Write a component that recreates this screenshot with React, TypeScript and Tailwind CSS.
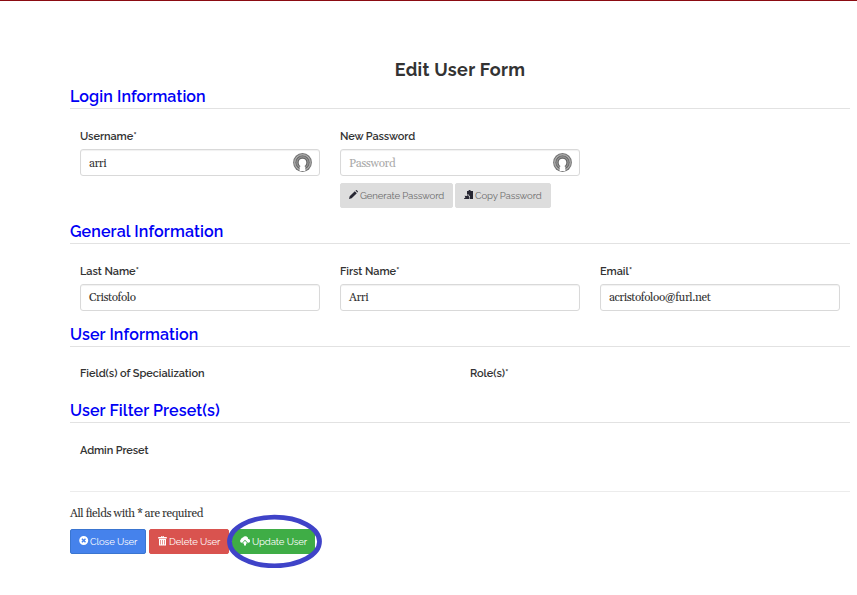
import type { ReactNode } from "react";

const sans = "font-['Raleway','Open_Sans',sans-serif]";
const serif = "font-['Georgia','Gelasio','Liberation_Serif',serif]";

function Section({ title, spacing, className }: { title: string; spacing: string; className: string }) {
  return (
    <div className={`border-b border-[#e2e2e2] ${className}`}>
      <h2 className={`whitespace-nowrap pt-px text-[16px] leading-[20px] font-semibold text-[#0000f5] ${spacing}`}>{title}</h2>
    </div>
  );
}

function Label({ children, spacing = "tracking-[-0.06px]", required = false }: { children: ReactNode; spacing?: string; required?: boolean }) {
  return (
    <div className={`h-[14px] whitespace-nowrap text-[11px] leading-[14px] font-semibold text-[#333] ${spacing}`}>
      {children}
      {required && <span className="font-medium">*</span>}
    </div>
  );
}

function KeyBadge() {
  return (
    <svg className="h-[20px] w-[20px]" viewBox="0 0 20 20" fill="none">
      <circle cx="10.5" cy="9.5" r="9.4" fill="#777" />
      <circle cx="10.5" cy="9.5" r="7.8" stroke="#ccc" strokeWidth=".8" />
      <circle cx="10.5" cy="9.5" r="6.6" fill="#666" />
      <circle cx="10.5" cy="9.5" r="5.6" stroke="#bbb" strokeWidth=".7" />
      <path d="M7.7 18V14.3L8.5 13.1C7.2 12.3 6.7 11 6.7 9.5a3.8 3.8 0 0 1 7.6 0c0 1.5-.5 2.8-1.8 3.6l.8 1.2V18Z" fill="#fff" />
    </svg>
  );
}

function Field({ label, value, muted = false, badge = false, required = true, spacing }: { label: string; value: string; muted?: boolean; badge?: boolean; required?: boolean; spacing?: string }) {
  return (
    <div className="w-[240px]">
      <Label required={required} spacing={spacing}>{label}</Label>
      <div className="mt-[5px] flex h-[27px] items-center justify-between rounded-[3px] border border-[#d9d9d9] pr-[7px] pl-2 shadow-[inset_0_1px_1px_rgba(0,0,0,0.06)]">
        <span className={`text-[11.7px] leading-[16px] tracking-[-0.42px] ${badge ? "pt-[2px]" : ""} ${serif} ${muted ? "text-[#aaa]" : "text-[#333]"}`}>{value}</span>
        {badge && <KeyBadge />}
      </div>
    </div>
  );
}

const icons = {
  pencil: <path d="m0 9 .7-2.7L5.8 1.2 7.8 3.2 2.7 8.3ZM6.5.6 6.9.2q.5-.3 1 .1l.8.9q.5.5.1.9l-.5.5Z" />,
  copy: <path d="M3 1h1.3L5 0h1.5v1H9v8H6V6.5L4 4 3 5.2Zm-3 7.4 1.4-.9-.8-1.8 2 .2L4 5l1.4 2.3V9H0Z" />,
  close: <path fillRule="evenodd" d="M4.7 0a4.5 4.5 0 1 0 0 9 4.5 4.5 0 0 0 0-9ZM3.4 2.2 4.7 3.5 6 2.2l1 1-1.3 1.3L7 5.8l-1 1-1.3-1.3-1.3 1.3-1-1 1.3-1.3-1.3-1.3Z" />,
  trash: <path fillRule="evenodd" d="M3 0h3v1h2.8v1.4H.2V1H3ZM3.6.6V1h1.8V.6ZM1 3h7v6.4H1Zm1.2.9v4.6h.6V3.9Zm2 0v4.6h.6V3.9Zm2 0v4.6h.6V3.9Z" />,
  upload: <path d="M2.3 6.8H1.9A1.9 1.9 0 0 1 1 3.3 2.1 2.1 0 0 1 3 1.6 2.8 2.8 0 0 1 8.2 3 1.9 1.9 0 0 1 8.2 6.8H7.9L5 3.8ZM5 4.8 7.5 7.5H6V9.6H4V7.5H2.5Z" />,
};

function Button({ icon, children, className, label }: { icon: keyof typeof icons; children: ReactNode; className: string; label: string }) {
  return (
    <button className={`flex h-[25px] items-center whitespace-nowrap rounded-[2px] border text-[9.6px] leading-[14px] ${className}`}>
      <svg className="mr-px -mt-px h-[10px] w-[10px] shrink-0" viewBox="0 0 10 10" fill="currentColor">{icons[icon]}</svg>
      <span className={label}>{children}</span>
    </button>
  );
}

export default function App() {
  return (
    <main className={`h-[595px] w-[857px] overflow-hidden border-t border-[#8b0b12] bg-white ${sans}`}>
      <div className="ml-[70px] w-[780px] pt-[57px]">
        <h1 className="h-[24px] text-center text-[18px] leading-[24px] font-bold tracking-[0.3px] text-[#333]">Edit User Form</h1>
        <Section title="Login Information" spacing="tracking-[0.1px]" className="mt-[4px] h-[23px]" />
        <div className="ml-[10px] mt-[21px] flex gap-5">
          <Field label="Username" value="arri" badge />
          <div>
            <Field label="New Password" value="Password" muted badge required={false} spacing="tracking-[-0.12px]" />
            <div className="mt-[7px] flex gap-[2px]">
              <Button icon="pencil" className="w-[113px] border-[#ddd] bg-[#ddd] pl-2 text-[#272733]" label="text-[#6c6c6c] tracking-[-0.13px]">Generate Password</Button>
              <Button icon="copy" className="w-[96px] border-[#ddd] bg-[#ddd] pl-2 text-[#272733]" label="text-[#6c6c6c] tracking-[-0.13px]">Copy Password</Button>
            </div>
          </div>
        </div>
        <Section title="General Information" spacing="tracking-[0.12px]" className="mt-[13px] h-[23px]" />
        <div className="ml-[10px] mt-[21px] flex gap-5">
          <Field label="Last Name" value="Cristofolo" />
          <Field label="First Name" value="Arri" />
          <Field label="Email" value="acristofoloo@furl.net" />
        </div>
        <Section title="User Information" spacing="tracking-[0.12px]" className="mt-[13px] h-[23px]" />
        <div className="ml-[10px] mt-[20px] grid grid-cols-[390px_1fr]">
          <Label>Field(s) of Specialization</Label>
          <Label required>Role(s)</Label>
        </div>
        <Section title="User Filter Preset(s)" spacing="tracking-[0.12px]" className="mt-[19px] h-[23px]" />
        <div className="ml-[10px] mt-[21px]"><Label spacing="tracking-[-0.12px]">Admin Preset</Label></div>
        <div className="mt-[33px] h-px bg-[#ececec]" />
        <p className={`mt-[14px] h-[16px] text-[11.7px] leading-[16px] tracking-[-0.42px] text-[#333] ${serif}`}>All fields with * are required</p>
        <div className="mt-[7px] flex gap-[3px] text-white">
          <Button icon="close" className="w-[76px] border-[#3a75d0] bg-[#4582ec] pl-2" label="tracking-[-0.1px]">Close User</Button>
          <Button icon="trash" className="w-[80px] border-[#d9534f] bg-[#d9534f] pl-2" label="tracking-[-0.12px]">Delete User</Button>
          <div className="relative">
            <Button icon="upload" className="w-[83px] border-[#3fad46] bg-[#3fad46] pl-[7px]" label="ml-px tracking-[-0.12px]">Update User</Button>
            <svg className="pointer-events-none absolute -top-[15px] -left-[5px] h-[54px] w-[96px]" viewBox="0 0 96 54" fill="none">
              <ellipse cx="47.5" cy="27.5" rx="45" ry="24.3" stroke="#3f43c8" strokeWidth="4.8" />
            </svg>
          </div>
        </div>
      </div>
    </main>
  );
}
